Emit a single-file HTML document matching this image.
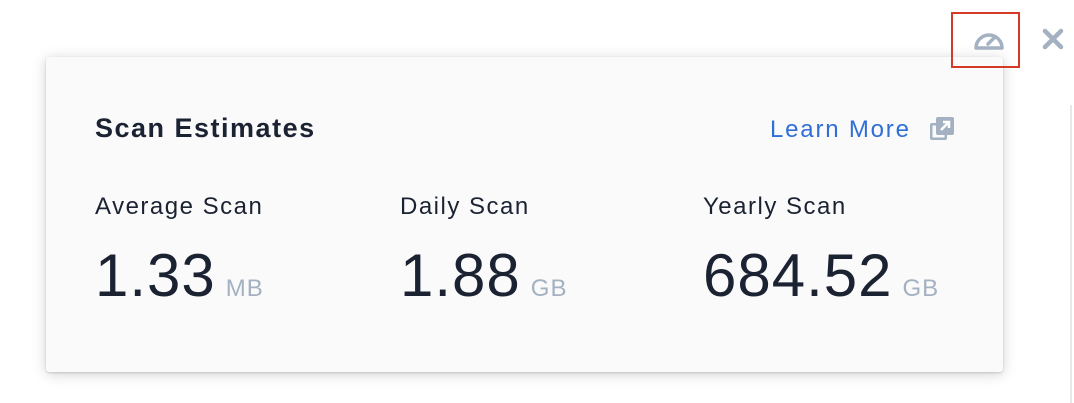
<!DOCTYPE html>
<html><head><meta charset="utf-8"><style>
html,body{margin:0;padding:0;width:1074px;height:403px;background:#fff;overflow:hidden;font-family:"Liberation Sans",sans-serif;}
.vline{position:absolute;left:1070px;top:105px;width:2px;height:298px;background:#e6e8eb;}
.card{position:absolute;left:46px;top:57px;width:957px;height:315px;background:#fafafa;border-radius:3px;box-shadow:0 2px 14px rgba(0,0,0,0.18),0 1px 2px rgba(0,0,0,0.15);}
.title{position:absolute;left:49px;top:56px;font-size:27px;color:#1b2232;font-weight:bold;letter-spacing:1.5px;}
.learn{position:absolute;left:724px;top:59px;font-size:24px;color:#2f6fd6;letter-spacing:1.8px;}
.ext{position:absolute;left:884px;top:60px;}
.col{position:absolute;top:136px;}
.lbl{font-size:24px;color:#1b2232;letter-spacing:1.5px;}
.val{margin-top:20px;font-size:60px;color:#1b2232;letter-spacing:1px;white-space:nowrap;}
.val span{font-size:24px;color:#a3b1c2;letter-spacing:1px;margin-left:10px;}
.box{position:absolute;left:951px;top:12px;width:69px;height:56px;border:2px solid #d43a26;box-sizing:border-box;}
</style></head><body>
<div class="vline"></div>
<div class="card">
  <div class="title">Scan Estimates</div>
  <div class="learn">Learn More</div>
  <svg class="ext" width="24" height="24" viewBox="0 0 24 24"><rect x="0" y="6" width="17" height="17" rx="2" fill="#a3b1c2"/><rect x="2.5" y="8.5" width="12" height="12" fill="#fafafa"/><rect x="6" y="0" width="18" height="18" rx="2" fill="#a3b1c2"/><path d="M11 13 L19 5 M13 5 H19 V11" stroke="#fff" stroke-width="2.5" fill="none"/></svg>
  <div class="col" style="left:49px"><div class="lbl">Average Scan</div><div class="val">1.33<span>MB</span></div></div>
  <div class="col" style="left:354px"><div class="lbl">Daily Scan</div><div class="val">1.88<span>GB</span></div></div>
  <div class="col" style="left:657px"><div class="lbl">Yearly Scan</div><div class="val">684.52<span>GB</span></div></div>
</div>
<div class="box"></div>
<svg style="position:absolute;left:973px;top:28px" width="32" height="22" viewBox="0 0 32 22"><path d="M3 20 A13 13 0 1 1 29 20 Z" fill="none" stroke="#a3b1c2" stroke-width="3.5" stroke-linejoin="round"/><path d="M15 16 L21 10" stroke="#a3b1c2" stroke-width="3.5" stroke-linecap="round"/></svg>
<svg style="position:absolute;left:1042px;top:28px" width="22" height="22" viewBox="0 0 22 22"><path d="M3 3 L19 19 M19 3 L3 19" stroke="#a3b1c2" stroke-width="4.5" stroke-linecap="round"/></svg>
</body></html>
